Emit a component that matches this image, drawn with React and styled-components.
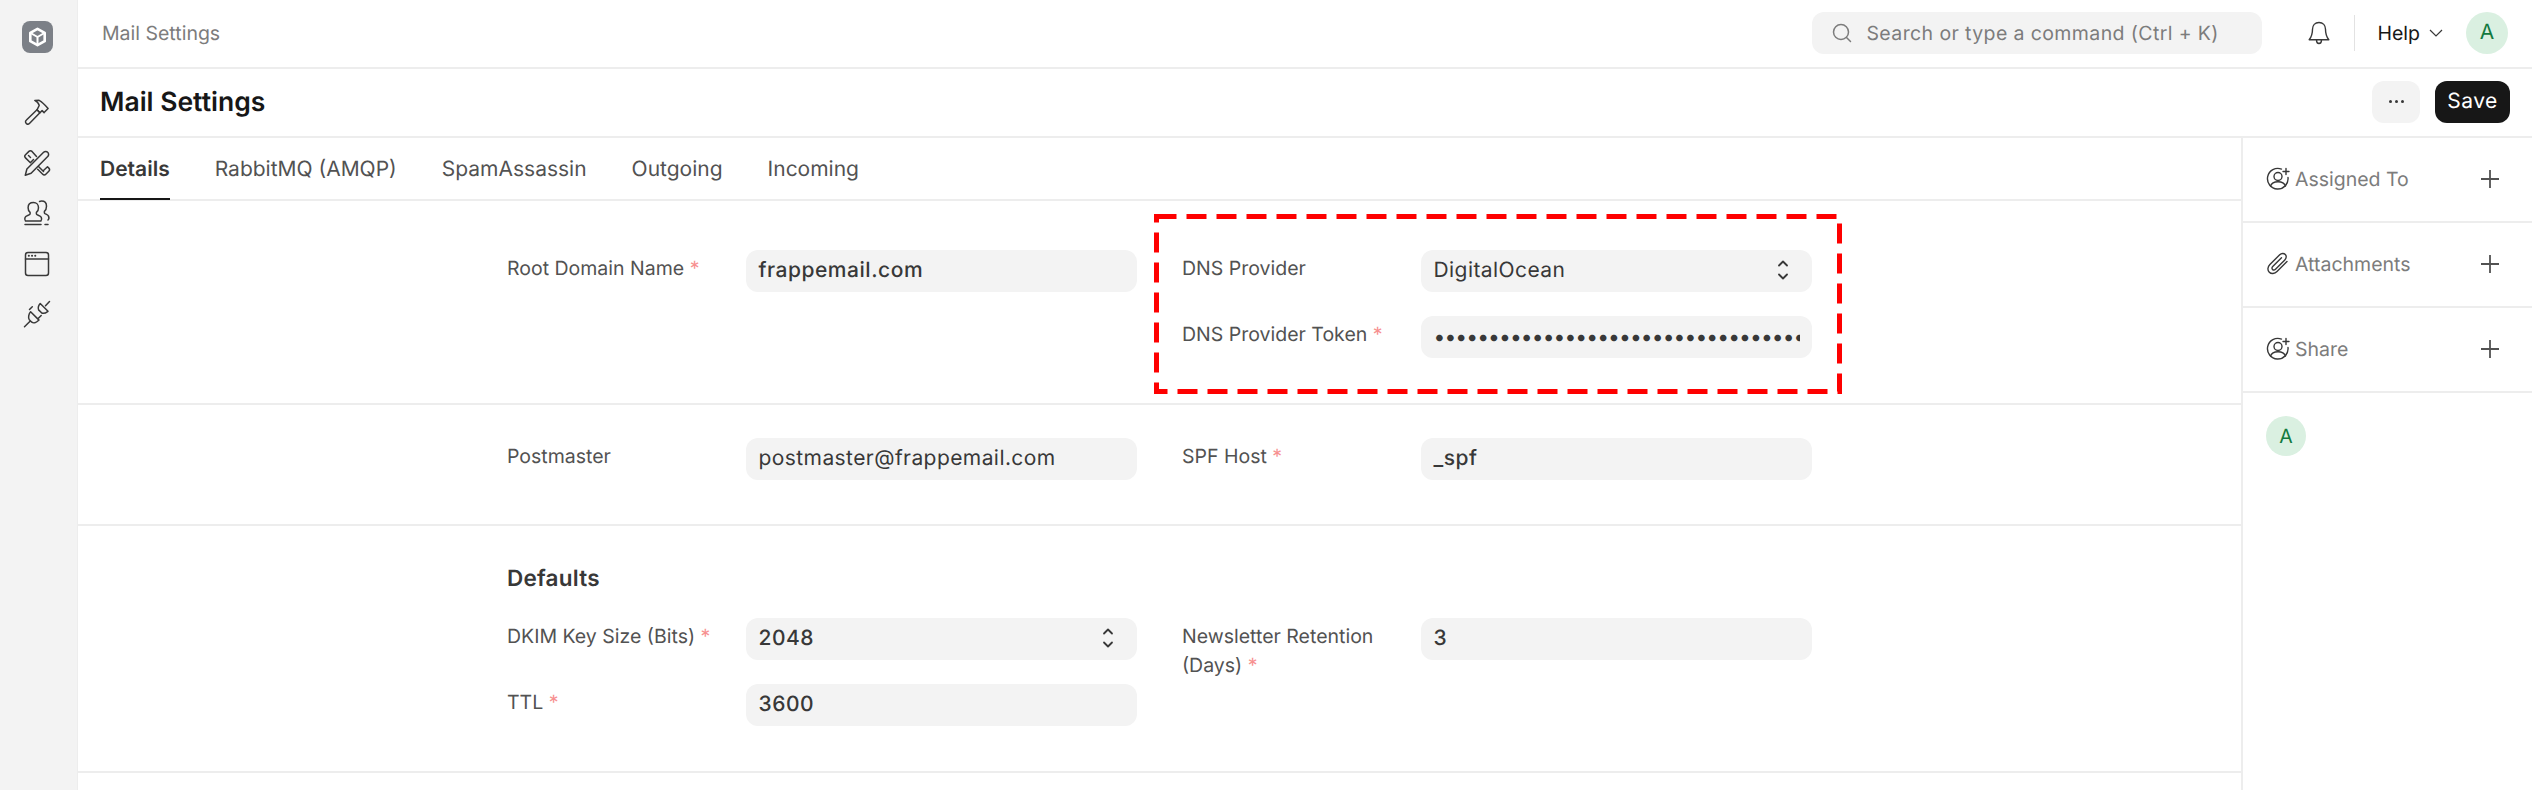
import React from "react";
import styled, { createGlobalStyle } from "styled-components";

const Global = createGlobalStyle`
  * { box-sizing: border-box; }
  html, body { margin: 0; padding: 0; background: #fff; }
  body { font-family: Inter, "Liberation Sans", sans-serif; color: #171717; text-rendering: geometricPrecision; }
`;

const Page = styled.div`
  width: 2532px; height: 790px; display: flex; overflow: hidden; background: #fff;
`;
const Rail = styled.aside`
  width: 78px; flex: none; background: #f3f3f3; border-right: 1px solid #ededed;
  display: flex; flex-direction: column; align-items: center; padding: 21px 3px 0 0;
`;
const Logo = styled.div`
  width: 31px; height: 32px; border-radius: 8px; background: #7c8087;
  display: flex; align-items: center; justify-content: center; margin-bottom: 45px;
`;
const RailIcon = styled.div`
  width: 28px; height: 28px; margin-bottom: 22.5px; display: flex; align-items: center; justify-content: center;
  svg { width: 28px; height: 28px; fill: none; stroke: #383838; stroke-width: 1.5; stroke-linecap: round; stroke-linejoin: round; }
`;
const Main = styled.div`
  flex: 1; min-width: 0; display: flex; flex-direction: column;
`;
const TopBar = styled.header`
  height: 69px; flex: none; border-bottom: 2px solid #ededed; display: flex; align-items: center;
  padding: 0 24px 2px 24px;
`;
const Crumb = styled.div`
  font-size: 19.5px; color: #7c7c7c; margin-right: auto;
`;
const Search = styled.div`
  width: 450px; height: 42px; border-radius: 12px; background: #f3f3f3; display: flex; align-items: center;
  padding-left: 20px; gap: 14px; color: #7c7c7c; font-size: 19.5px; letter-spacing: 0.02em;
`;
const Bell = styled.div`
  margin-left: 44px; width: 26px; height: 26px;
  svg { width: 26px; height: 26px; fill: none; stroke: #383838; stroke-width: 1.4; stroke-linejoin: round; stroke-linecap: round; }
`;
const VLine = styled.div`
  width: 1px; height: 36px; background: #e2e2e2; margin-left: 22px;
`;
const Help = styled.div`
  margin-left: 22px; display: flex; align-items: center; gap: 9px; font-size: 19.5px; color: #171717;
`;
const Avatar = styled.div`
  width: ${p => p.$size}px; height: ${p => p.$size}px; border-radius: 50%; background: #daf0e1; color: #137a3f;
  display: flex; align-items: center; justify-content: center; font-size: ${p => p.$font}px; flex: none;
`;
const TopAvatar = styled(Avatar)`
  margin-left: 23px;
`;
const TitleBar = styled.div`
  height: 69px; flex: none; border-bottom: 2px solid #ededed; display: flex; align-items: center;
  padding: 0 22px 2px 22px;
`;
const Title = styled.h1`
  font-size: 26.5px; font-weight: 600; margin: 0 auto 0 0; color: #171717;
`;
const MoreButton = styled.button`
  width: 48px; height: 42px; border: 0; border-radius: 12px; background: #f3f3f3; display: flex;
  align-items: center; justify-content: center; gap: 3px; padding: 0; margin-right: 15px;
`;
const Dot = styled.span`
  width: 3px; height: 3px; border-radius: 50%; background: #383838;
`;
const SaveButton = styled.button`
  width: 75px; height: 42px; border: 0; border-radius: 12px; background: #171717; color: #fff;
  font: 400 21px Inter, sans-serif; padding: 0; letter-spacing: 0.02em; text-rendering: geometricPrecision;
`;
const Body = styled.div`
  flex: 1; display: flex; min-height: 0;
`;
const Content = styled.div`
  flex: 1; min-width: 0;
`;
const Tabs = styled.nav`
  height: 63px; border-bottom: 2px solid #ededed; display: flex; padding-left: 22px; gap: 45px;
`;
const Tab = styled.div`
  height: 62px; display: flex; align-items: center; font-size: 21px;
  color: ${p => (p.$active ? "#383838" : "#525252")}; font-weight: ${p => (p.$active ? 600 : 400)};
  ${p => p.$active && "box-shadow: inset 0 -2px 0 #171717;"}
`;
const Section = styled.section`
  height: ${p => p.$h}px; border-bottom: 2px solid #ededed; padding: ${p => p.$top}px 0 0 429px;
`;
const SectionHead = styled.h3`
  font-size: 22.5px; font-weight: 600; color: #383838; margin: 0 0 26px 0; line-height: 26px; letter-spacing: 0.01em;
`;
const Cols = styled.div`
  display: grid; grid-template-columns: 630px 630px; column-gap: 45px; align-items: start;
`;
const Col = styled.div`
  display: flex; flex-direction: column; gap: 24px; position: relative;
`;
const Row = styled.div`
  display: grid; grid-template-columns: 239px 391px; height: 42px;
`;
const Label = styled.div`
  font-size: 19.5px; color: #525252; line-height: 29px; padding: 4px 10px 0 0;
`;
const Req = styled.span`
  color: #f56b6b; opacity: .75;
`;
const Field = styled.div`
  height: 42px; border-radius: 12px; background: #f3f3f3; padding: 0 12.5px 2px; display: flex; align-items: center;
  justify-content: space-between; font-size: 21px; color: #383838; overflow: hidden; white-space: nowrap;
  font-weight: ${p => (p.$bold ? 500 : 400)}; letter-spacing: ${p => (p.$bold ? "0.025em" : "0.02em")};
`;
const Dots = styled.span`
  display: block; overflow: hidden; flex: 1; letter-spacing: -0.9px; font-size: 21px; padding-top: 2px;
`;
const Stepper = styled.svg`
  width: 18px; height: 24px; margin-right: 8px; fill: none; stroke: #383838; stroke-width: 1.8; stroke-linecap: round; stroke-linejoin: round; flex: none;
`;
const Highlight = styled.div`
  position: absolute; left: -28px; top: -36px; width: 688px; height: 180px; pointer-events: none;
  svg { display: block; width: 100%; height: 100%; }
`;
const Side = styled.aside`
  width: 291px; flex: none; border-left: 2px solid #ededed;
`;
const SideRow = styled.div`
  height: 85px; border-bottom: 2px solid #ededed; display: flex; align-items: center; padding: 0 33px 2px 23px;
`;
const SideIcon = styled.div`
  width: 24px; height: 24px; margin-right: 5px; flex: none;
  svg { width: 24px; height: 24px; fill: none; stroke: #383838; stroke-width: 1.4; stroke-linecap: round; stroke-linejoin: round; }
`;
const SideLabel = styled.div`
  flex: 1; font-size: 19.5px; color: #7c7c7c;
`;
const Plus = styled.svg`
  width: 18px; height: 18px; stroke: #525252; stroke-width: 1.8; fill: none; flex: none;
`;
const SideAvatarWrap = styled.div`
  padding: 23px 0 0 23px;
`;

const PlusIcon = () => <Plus viewBox="0 0 18 18"><path d="M9 0v18M0 9h18" /></Plus>;
const UserPlus = () => (
  <svg viewBox="0 0 24 24">
    <path d="M15.500 2.100A10.300 10.300 0 1 0 22 10.500" />
    <circle cx="12" cy="9.500" r="4" />
    <path d="M4.500 19c1-3 4-4.300 7.500-4.300s6.500 1.300 7.500 4.300" />
    <path d="M20 1.500v6M17 4.500h6" />
  </svg>
);
const Clip = () => (
  <svg viewBox="0 0 24 24">
    <path d="M21 9.500 11 19.600c-2.400 2.400-5.800 2.500-7.700.6-2-2-1.800-5.300.6-7.700L13.700 2.800c1.700-1.700 4.200-1.800 5.600-.4 1.400 1.400 1.200 3.800-.5 5.500L9.500 17.200c-.9.900-2.200 1-3 .2-.8-.8-.7-2.100.2-3L15.500 5.700" />
  </svg>
);

const Chevrons = () => (
  <Stepper viewBox="0 0 18 24"><path d="M5 7.500 9 3.500l4 4M5 16.500 9 20.500l4-4" /></Stepper>
);

const Field1 = ({ label, req, children }) => (
  <Row>
    <Label>{label}{req && <> <Req>*</Req></>}</Label>
    {children}
  </Row>
);

export default function App() {
  return (
    <>
      <Global />
      <Page>
        <Rail>
          <Logo>
            <svg width="19" height="20" viewBox="0 0 19 20" fill="none" stroke="#fff" strokeWidth="2.6" strokeLinejoin="round">
              <path d="M9.500 1.800 16.700 5.800v8.400L9.500 18.200 2.300 14.200V5.800z" />
              <path d="M2.600 6 9.500 10l6.900-4M9.500 10v8" strokeWidth="2" />
            </svg>
          </Logo>
          <RailIcon>
            <svg viewBox="0 0 28 28">
              <path d="M3.200 22.300 14 11.800l2.900 2.900L6.400 25.600c-.8.800-2 .8-2.900 0l-.4-.4c-.8-.8-.8-2.100.1-2.900z" />
              <path d="M14 11.800 16.900 14.700l2.200-2.100 2 2 4-4.100c-3-3.600-6.200-6.700-9-8.200l-4.300.1c2.600 1.500 4.200 3 4.400 5.100z" />
            </svg>
          </RailIcon>
          <RailIcon>
            <svg viewBox="0 0 28 28">
              <path d="M2.300 26.200 3.900 20 20.600 3.300c1.200-1.200 3-1.200 4.100 0 1.200 1.200 1.200 3 0 4.200L8.100 24.300z" />
              <path d="M10.500 10.500 7.400 13.800 2.500 8.900c-.9-.9-.9-2.200 0-3.100L5.900 2.400c.9-.9 2.200-.9 3.100 0l4.500 5" />
              <path d="M15.500 17.500l5 5M20.500 21.500l4-3.700 1.300 1.300c.9.900.9 2.200 0 3.100l-3 3c-.9.900-2.200.9-3.100 0l-5-5" />
              <path d="M5.500 6.500l2 2" />
            </svg>
          </RailIcon>
          <RailIcon>
            <svg viewBox="0 0 28 28">
              <path d="M10.500 3.500c3 0 5 2.200 5 5.200 0 2-.8 3.700-2.100 4.700v1.600c0 1 4 1.400 4.800 3.100.5 1 .5 2.900-.3 3.900H2.500c-.8-1-.8-2.900-.3-3.900.8-1.700 4.900-2.100 4.900-3.100v-1.600c-1.300-1-2-2.700-2-4.700 0-3 2-5.200 5.400-5.200zM2 25.500h16" />
              <path d="M16.500 2.500c.7-.3 1.400-.4 2-.4 3.200 0 5 2.300 5 5.200 0 2.300-.8 4-2.100 5v1.600c0 1 3.400 1.600 4.100 3.200.5 1.100.3 3.200-.5 3.900M22 25.500h3" />
            </svg>
          </RailIcon>
          <RailIcon>
            <svg viewBox="0 0 28 28">
              <rect x="2.500" y="2.500" width="23" height="23" rx="2.500" />
              <path d="M2.500 9h23" />
              <path d="M5.800 5.800h.1M9 5.800h.1M12.200 5.800h.1" strokeWidth="2" />
            </svg>
          </RailIcon>
          <RailIcon>
            <svg viewBox="0 0 28 28">
              <path d="M17.200 3.500 25 11.300c-1.900 1.400-4.400 2.700-6.200 1.700l-3.200-3.100c-1-1.900.1-5 1.600-6.400zM22.500 5.800 26.500 1.500" />
              <path d="M7.600 11.700l8.400 8.400c-2 2.100-5.300 3.500-7.200 2.100l-2.500-2.500C4.900 17.900 5.700 13.700 7.600 11.700zM6.800 21.500 1.500 26.800M6.500 9.500l2.800-2.800M15.400 18.300l2.800-2.800" />
            </svg>
          </RailIcon>
        </Rail>
        <Main>
          <TopBar>
            <Crumb>Mail Settings</Crumb>
            <Search>
              <svg width="20" height="20" viewBox="0 0 20 20" fill="none" stroke="#7c7c7c" strokeWidth="1.5" strokeLinecap="round">
                <circle cx="9" cy="9" r="7.500" /><path d="m14.500 14.500 4 4" />
              </svg>
              Search or type a command (Ctrl + K)
            </Search>
            <Bell>
              <svg viewBox="0 0 26 26">
                <path d="M13 2.500c-4 0-6.500 3-6.500 6.800 0 5.700-1.300 8-3.300 10.500h19.600c-2-2.500-3.300-4.800-3.300-10.500 0-3.800-2.500-6.800-6.500-6.800zM10.500 20c0 2 1 3.500 2.500 3.500s2.500-1.500 2.500-3.500" />
              </svg>
            </Bell>
            <VLine />
            <Help>
              Help
              <svg width="14" height="8" viewBox="0 0 14 8" fill="none" stroke="#383838" strokeWidth="1.200"><path d="m1 1 6 6 6-6" /></svg>
            </Help>
            <TopAvatar $size={42} $font={21}>A</TopAvatar>
          </TopBar>
          <TitleBar>
            <Title>Mail Settings</Title>
            <MoreButton aria-label="More"><Dot /><Dot /><Dot /></MoreButton>
            <SaveButton>Save</SaveButton>
          </TitleBar>
          <Body>
            <Content>
              <Tabs>
                <Tab $active>Details</Tab>
                <Tab>RabbitMQ (AMQP)</Tab>
                <Tab>SpamAssassin</Tab>
                <Tab>Outgoing</Tab>
                <Tab>Incoming</Tab>
              </Tabs>
              <Section $h={204} $top={49}>
                <Cols>
                  <Col>
                    <Field1 label="Root Domain Name" req><Field $bold>frappemail.com</Field></Field1>
                  </Col>
                  <Col>
                    <Highlight>
                      <svg viewBox="0 0 688 180">
                        <rect x="2.500" y="2.500" width="683" height="175" fill="none" stroke="#fe0000" strokeWidth="5" strokeDasharray="20 10" />
                      </svg>
                    </Highlight>
                    <Field1 label="DNS Provider"><Field>DigitalOcean<Chevrons /></Field></Field1>
                    <Field1 label="DNS Provider Token" req>
                      <Field><Dots>{"•".repeat(60)}</Dots></Field>
                    </Field1>
                  </Col>
                </Cols>
              </Section>
              <Section $h={121} $top={33}>
                <Cols>
                  <Col><Field1 label="Postmaster"><Field>postmaster@frappemail.com</Field></Field1></Col>
                  <Col><Field1 label="SPF Host" req><Field $bold>_spf</Field></Field1></Col>
                </Cols>
              </Section>
              <Section $h={247} $top={40}>
                <SectionHead>Defaults</SectionHead>
                <Cols>
                  <Col>
                    <Field1 label="DKIM Key Size (Bits)" req><Field $bold>2048<Chevrons /></Field></Field1>
                    <Field1 label="TTL" req><Field $bold>3600</Field></Field1>
                  </Col>
                  <Col>
                    <Field1 label="Newsletter Retention (Days)" req><Field $bold>3</Field></Field1>
                  </Col>
                </Cols>
              </Section>
            </Content>
            <Side>
              <SideRow><SideIcon><UserPlus /></SideIcon><SideLabel>Assigned To</SideLabel><PlusIcon /></SideRow>
              <SideRow><SideIcon><Clip /></SideIcon><SideLabel>Attachments</SideLabel><PlusIcon /></SideRow>
              <SideRow><SideIcon><UserPlus /></SideIcon><SideLabel>Share</SideLabel><PlusIcon /></SideRow>
              <SideAvatarWrap><Avatar $size={40} $font={19.5}>A</Avatar></SideAvatarWrap>
            </Side>
          </Body>
        </Main>
      </Page>
    </>
  );
}
